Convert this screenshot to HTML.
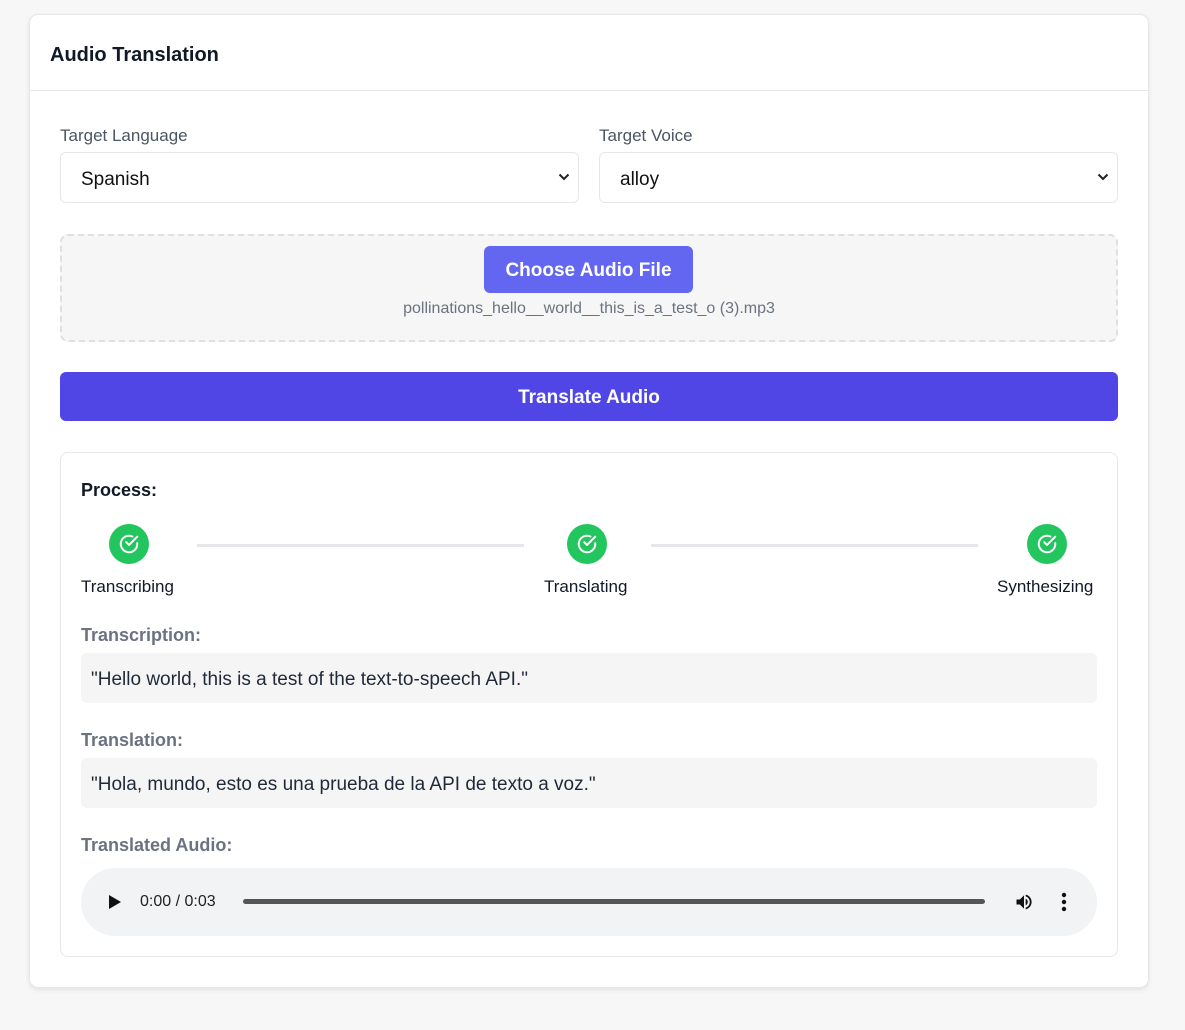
<!DOCTYPE html>
<html><head><meta charset="utf-8"><style>
*{box-sizing:border-box;margin:0;padding:0}
body{width:1185px;height:1030px;background:#f7f7f7;font-family:"Liberation Sans",sans-serif;color:#1f2937;position:relative;overflow:hidden}
.card{position:absolute;left:30px;top:15px;width:1118px;height:972px;background:#fff;border-radius:8px;box-shadow:0 0 0 1px #e5e7eb,0 2px 6px rgba(0,0,0,.12)}
.hdr{height:76px;border-bottom:1px solid #e5e7eb;padding-left:20px;font-size:20px;font-weight:bold;line-height:80px;color:#111827}
.a{position:absolute}
.lbl{font-size:17px;color:#4b5563}
.sel{border:1px solid #e5e7eb;border-radius:6px;height:51px;width:519px;font-size:19px;padding-left:20px;line-height:53px;color:#111}
.sel svg{position:absolute;right:8px;top:20px}
.drop{left:30px;top:219px;width:1058px;height:108px;border:2px dashed #e0e0e0;border-radius:8px;background:#f6f6f6}
.btn1{left:454px;top:231px;width:209px;height:47px;background:#6366f1;border-radius:6px;color:#fff;font-weight:bold;font-size:19px;text-align:center;line-height:50px}
.fn{left:0;width:1118px;top:285px;text-align:center;font-size:16px;color:#6b7280}
.btn2{left:30px;top:357px;width:1058px;height:49px;background:#4f46e5;border-radius:6px;color:#fff;font-weight:bold;font-size:19px;text-align:center;line-height:51px}
.proc{left:30px;top:437px;width:1058px;height:505px;border:1px solid #e5e7eb;border-radius:8px}
.circ{width:40px;height:40px;border-radius:50%;background:#22c55e;position:absolute}
.circ svg{position:absolute;left:9px;top:9px}
.line{height:3px;background:#e5e7eb;position:absolute;top:91px}
.st{font-size:17px;color:#111827;position:absolute;top:124px}
.sub{font-size:18px;color:#6b7280;font-weight:bold;position:absolute;left:20px}
.box{position:absolute;left:20px;width:1016px;height:50px;background:#f5f5f5;border-radius:6px;font-size:19px;line-height:54px;padding-left:10px;color:#1f2937}
.aud{position:absolute;left:20px;top:415px;width:1016px;height:68px;border-radius:34px;background:#f1f3f4}
</style></head><body>
<div class="card">
<div class="hdr">Audio Translation</div>
<div class="a lbl" style="left:30px;top:111px">Target Language</div>
<div class="a lbl" style="left:569px;top:111px">Target Voice</div>
<div class="a sel" style="left:30px;top:137px">Spanish<svg width="12" height="8" viewBox="0 0 12 8"><path d="M1.5 1.5L6 6l4.5-4.5" stroke="#222" stroke-width="2" fill="none"/></svg></div>
<div class="a sel" style="left:569px;top:137px">alloy<svg width="12" height="8" viewBox="0 0 12 8"><path d="M1.5 1.5L6 6l4.5-4.5" stroke="#222" stroke-width="2" fill="none"/></svg></div>
<div class="a drop"></div>
<div class="a btn1">Choose Audio File</div>
<div class="a fn">pollinations_hello__world__this_is_a_test_o (3).mp3</div>
<div class="a btn2">Translate Audio</div>
<div class="a proc">
<div class="a" style="left:20px;top:27px;font-size:18px;font-weight:bold;color:#111827">Process:</div>
<div class="circ" style="left:48px;top:71px"><svg width="22" height="22" viewBox="0 0 24 24" fill="none" stroke="#fff" stroke-width="2.2" stroke-linecap="round" stroke-linejoin="round"><path d="M21 11v1a9 9 0 1 1-5.3-8.2"/><path d="M21 4L12 13l-3-3"/></svg></div>
<div class="circ" style="left:506px;top:71px"><svg width="22" height="22" viewBox="0 0 24 24" fill="none" stroke="#fff" stroke-width="2.2" stroke-linecap="round" stroke-linejoin="round"><path d="M21 11v1a9 9 0 1 1-5.3-8.2"/><path d="M21 4L12 13l-3-3"/></svg></div>
<div class="circ" style="left:966px;top:71px"><svg width="22" height="22" viewBox="0 0 24 24" fill="none" stroke="#fff" stroke-width="2.2" stroke-linecap="round" stroke-linejoin="round"><path d="M21 11v1a9 9 0 1 1-5.3-8.2"/><path d="M21 4L12 13l-3-3"/></svg></div>
<div class="line" style="left:136px;width:327px"></div>
<div class="line" style="left:590px;width:327px"></div>
<div class="st" style="left:20px">Transcribing</div>
<div class="st" style="left:483px">Translating</div>
<div class="st" style="left:936px">Synthesizing</div>
<div class="sub" style="top:172px">Transcription:</div>
<div class="box" style="top:200px">"Hello world, this is a test of the text-to-speech API."</div>
<div class="sub" style="top:277px">Translation:</div>
<div class="box" style="top:305px">"Hola, mundo, esto es una prueba de la API de texto a voz."</div>
<div class="sub" style="top:382px">Translated Audio:</div>
<div class="aud">
<svg class="a" style="left:27px;top:27px" width="14" height="14" viewBox="0 0 14 14"><path d="M1 0L13 7L1 14z" fill="#111"/></svg>
<div class="a" style="left:59px;top:25px;font-size:16px;color:#222">0:00 / 0:03</div>
<div class="a" style="left:162px;top:31px;width:742px;height:5px;border-radius:3px;background:#555"></div>
<svg class="a" style="left:933px;top:24px" width="20" height="20" viewBox="0 0 24 24"><path d="M3 9v6h4l5 5V4L7 9z" fill="#111"/><path d="M16.5 12A4.5 4.5 0 0 0 14 8v8a4.5 4.5 0 0 0 2.5-4z" fill="#111"/><path d="M14 3.2v2.1a7 7 0 0 1 0 13.4v2.1a9 9 0 0 0 0-17.6z" fill="#111"/></svg>
<svg class="a" style="left:980px;top:24px" width="6" height="20" viewBox="0 0 6 20"><circle cx="3" cy="3" r="2.2" fill="#111"/><circle cx="3" cy="10" r="2.2" fill="#111"/><circle cx="3" cy="17" r="2.2" fill="#111"/></svg>
</div>
</div>
</div>
</body></html>
